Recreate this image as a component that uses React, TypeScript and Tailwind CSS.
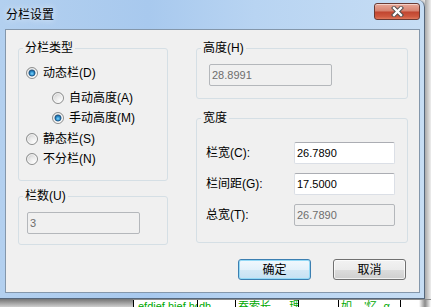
import React from "react";

function Radio({ checked }: { checked?: boolean }) {
  return (
    <svg width="12" height="12" viewBox="0 0 12 12" className="shrink-0">
      <circle cx="6" cy="6" r="5.5" fill="url(#radioBg)" stroke="#8e8f8f" />
      <circle cx="6" cy="6" r="4.3" fill="none" stroke="#ffffff" strokeOpacity="0.7" />
      {checked && <circle cx="6" cy="6" r="3.1" fill="url(#radioDot)" stroke="#1b4f7d" strokeWidth="0.8" />}
    </svg>
  );
}

function Group({ title, className, children }: { title: string; className?: string; children?: React.ReactNode }) {
  return (
    <fieldset className={`border border-[#d5dfe5] rounded-[3px] ${className ?? ""}`}>
      <legend className="ml-[4px] px-[2px] leading-[14px]">{title}</legend>
      {children}
    </fieldset>
  );
}

function Field({ value, disabled, className }: { value: string; disabled?: boolean; className?: string }) {
  return (
    <div
      className={`h-[22px] flex items-center pl-[2px] rounded-[2px] border text-[11px] ${
        disabled
          ? "bg-[#f0f0f0] border-[#b4b7bb] text-[#6d6d6d]"
          : "bg-white border-[#dbdfe6] border-t-[#abadb3] text-black"
      } ${className ?? ""}`}
    >
      {value}
    </div>
  );
}

export default function App() {
  return (
    <div className="w-[431px] h-[307px] overflow-hidden bg-[#e6e6e6] flex flex-col font-['Liberation_Sans','Noto_Sans_CJK_SC',sans-serif] text-[12px] leading-none text-black">
      <svg width="0" height="0" className="block">
        <defs>
          <radialGradient id="radioBg" cx="0.65" cy="0.7" r="0.7">
            <stop offset="0" stopColor="#fbfbfb" />
            <stop offset="0.6" stopColor="#e6e6e6" />
            <stop offset="1" stopColor="#c9c9c9" />
          </radialGradient>
          <radialGradient id="radioDot" cx="0.5" cy="0.6" r="0.6">
            <stop offset="0" stopColor="#7fd6fb" />
            <stop offset="0.55" stopColor="#2a8bcb" />
            <stop offset="1" stopColor="#0c4a7c" />
          </radialGradient>
        </defs>
      </svg>

      <div className="flex h-[299px]">
        {/* window */}
        <div className="w-[425px] h-[299px] flex flex-col rounded-tr-[7px] border-r border-b border-[#55677c] bg-[linear-gradient(90deg,#b3d0ef,#a8c9ee_35%,#b8d4f2_60%,#c6ddf4)] pl-[5px] pr-[4px] pb-[5px] shadow-[1px_1px_3px_rgba(0,0,0,0.45)]">
          <div className="h-[29px] flex items-start">
            <span className="mt-[8px] ml-[1px] leading-[14px] [text-shadow:0_0_6px_rgba(255,255,255,0.95)]">分栏设置</span>
            <div className="ml-auto mt-[3px] w-[46px] h-[17px] rounded-[3px] border border-[#6a3a33] bg-[linear-gradient(#e8a797,#d6826f_48%,#c0442f_52%,#cf5a40_85%,#e07a5e)] shadow-[inset_0_1px_0_rgba(255,255,255,0.5)] flex items-center justify-center">
              <svg width="15" height="11" viewBox="0 0 15 11">
                <path d="M4 2 L11 9 M11 2 L4 9" stroke="#4d4d4d" strokeWidth="4.2" strokeLinecap="square" />
                <path d="M4 2 L11 9 M11 2 L4 9" stroke="#ffffff" strokeWidth="2.3" strokeLinecap="square" />
              </svg>
            </div>
          </div>

          {/* client area */}
          <div className="h-[264px] bg-[#f0f0f0] border border-[#8497ab] flex gap-[28px] pl-[12px] pt-[11px]">
            <div className="w-[150px] flex flex-col">
              <Group title="分栏类型" className="h-[140px]">
                <div className="flex flex-col pl-[7px]">
                  <div className="mt-[8px] h-[20px] flex items-center gap-[5px]">
                    <Radio checked />
                    <span>动态栏(D)</span>
                  </div>
                  <div className="mt-[5px] h-[20px] flex items-center gap-[5px] pl-[26px]">
                    <Radio />
                    <span>自动高度(A)</span>
                  </div>
                  <div className="h-[20px] flex items-center gap-[5px] pl-[26px]">
                    <Radio checked />
                    <span>手动高度(M)</span>
                  </div>
                  <div className="mt-[1px] h-[20px] flex items-center gap-[5px]">
                    <Radio />
                    <span>静态栏(S)</span>
                  </div>
                  <div className="h-[20px] flex items-center gap-[5px]">
                    <Radio />
                    <span>不分栏(N)</span>
                  </div>
                </div>
              </Group>
              <Group title="栏数(U)" className="mt-[8px] h-[56px]">
                <Field value="3" disabled className="mt-[9px] ml-[8px] w-[113px]" />
              </Group>
            </div>

            <div className="w-[212px] flex flex-col">
              <Group title="高度(H)" className="h-[58px]">
                <Field value="28.8991" disabled className="mt-[9px] ml-[12px] w-[123px]" />
              </Group>
              <Group title="宽度" className="mt-[12px] h-[132px]">
                <div className="flex flex-col pl-[9px]">
                  <div className="mt-[17px] flex items-center">
                    <span className="w-[88px]">栏宽(C):</span>
                    <Field value="26.7890" className="w-[101px]" />
                  </div>
                  <div className="mt-[9px] flex items-center">
                    <span className="w-[88px]">栏间距(G):</span>
                    <Field value="17.5000" className="w-[101px]" />
                  </div>
                  <div className="mt-[9px] flex items-center">
                    <span className="w-[88px]">总宽(T):</span>
                    <Field value="26.7890" disabled className="w-[101px]" />
                  </div>
                </div>
              </Group>
              <div className="mt-[16px] flex justify-end gap-[22px] pr-[2px]">
                <button className="w-[73px] h-[21px] rounded-[3px] border border-[#3c7fb1] bg-[linear-gradient(#f1f8fd,#e3f1fa_50%,#d4e9f6_50%,#c5e1f3)] shadow-[inset_0_0_0_1px_#93d9f6] leading-none">
                  确定
                </button>
                <button className="w-[73px] h-[21px] rounded-[3px] border border-[#707070] bg-[linear-gradient(#f2f2f2,#ebebeb_50%,#dddddd_50%,#cfcfcf)] shadow-[inset_0_0_0_1px_rgba(255,255,255,0.7)] leading-none">
                  取消
                </button>
              </div>
            </div>
          </div>
        </div>
        <div className="flex-1 bg-[linear-gradient(90deg,#a9a9a9,#eeeeee)]" />
      </div>

      {/* what lies below the dialog */}
      <div className="h-[8px] flex">
        <div className="w-[133px] bg-[linear-gradient(#747474,#cfcfcf)]" />
        <div className="flex-1 flex bg-white border-t border-[#8a8a8a] overflow-hidden whitespace-nowrap text-[11px] leading-[11px] text-[#00a800]">
          <div className="w-[64px] border-l border-black pl-[4px] pt-[1px] overflow-hidden">efdief hief hdefdh</div>
          <div className="w-[38px] border-l border-black pl-[1px] pt-[1px] overflow-hidden">dh</div>
          <div className="w-[63px] border-l border-black pl-[2px] pt-[1px] overflow-hidden">吞索长. . . 理</div>
          <div className="w-[40px] border-l border-black" />
          <div className="w-[62px] border-l border-black pl-[2px] pt-[1px] overflow-hidden">如. . &#39;忆. α</div>
          <div className="flex-1 border-l border-black bg-[linear-gradient(90deg,#ffffff,#ffffff_60%,#8a8a8a_80%,#ffffff)]" />
        </div>
      </div>
    </div>
  );
}
